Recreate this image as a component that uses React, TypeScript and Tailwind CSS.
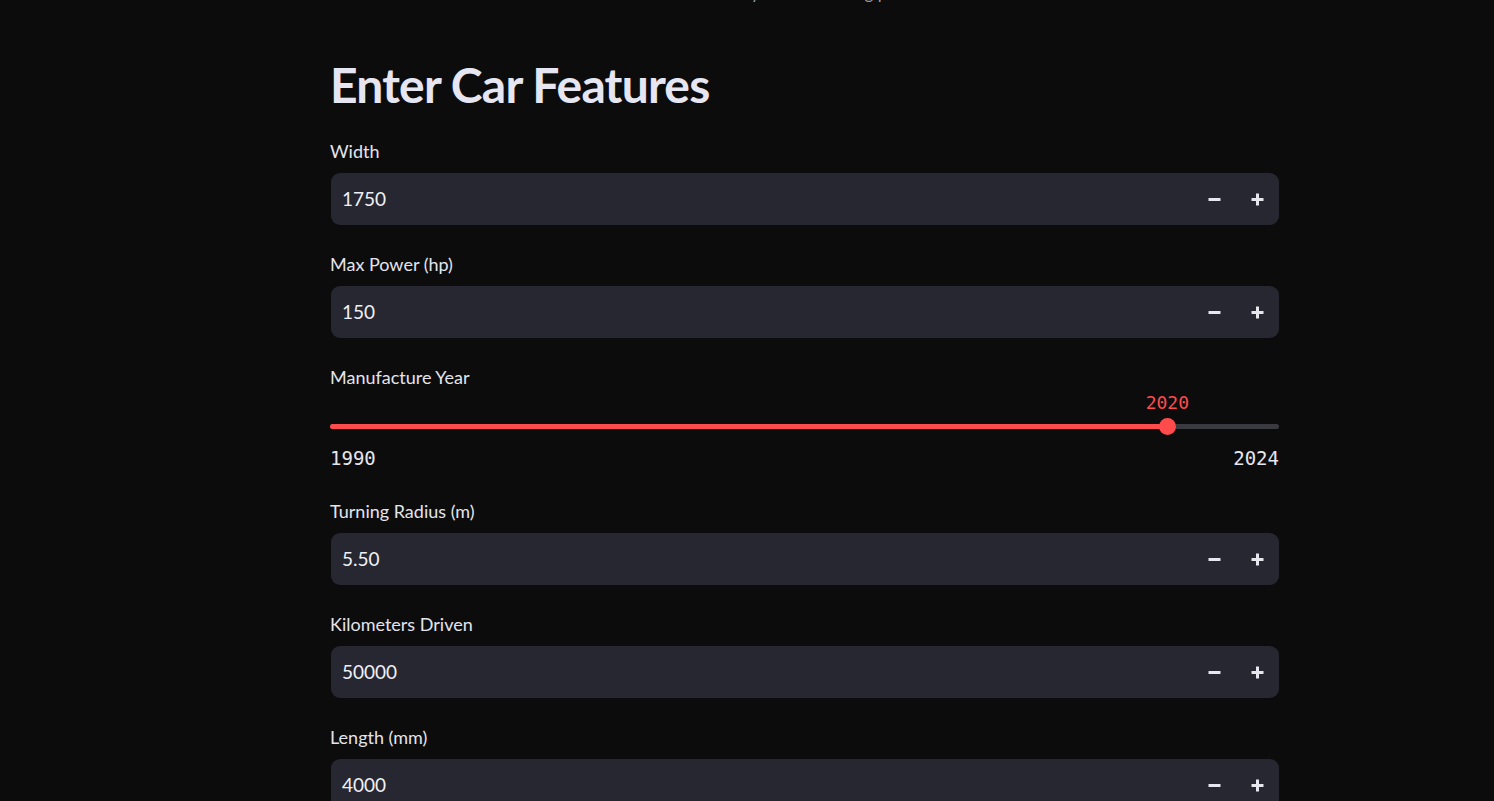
import React from "react";

const sans = { fontFamily: '"Lato", "Noto Sans", sans-serif' };
const mono = { fontFamily: '"DejaVu Sans Mono", "Liberation Mono", monospace' };

function Minus() {
  return (
    <svg width="13" height="13" viewBox="0 0 13 13">
      <rect x="0.5" y="5" width="12" height="3" fill="#e6e6ee" />
    </svg>
  );
}
function Plus() {
  return (
    <svg width="13" height="13" viewBox="0 0 13 13">
      <rect x="0.5" y="5" width="12" height="3" fill="#e6e6ee" />
      <rect x="5" y="0.5" width="3" height="12" fill="#e6e6ee" />
    </svg>
  );
}

function NumberField({ label, value }: { label: string; value: string }) {
  return (
    <div className="mb-[27px]">
      <div className="h-[24px] leading-[24px] text-[18px] text-[#e4e4ec] mb-[10px]" style={sans}>
        {label}
      </div>
      <div className="ml-[1px] h-[52px] rounded-[9px] bg-[#262730] flex items-center">
        <div className="flex-1 pl-[11px] text-[19px] text-[#f0f0f6]" style={sans}>
          {value}
        </div>
        <div className="w-[43px] h-full flex items-center justify-center">
          <Minus />
        </div>
        <div className="w-[43px] h-full flex items-center justify-center">
          <Plus />
        </div>
      </div>
    </div>
  );
}

function SliderField() {
  const pct = ((2020 - 1990) / (2024 - 1990)) * 100;
  return (
    <div className="mb-[31px]">
      <div className="h-[24px] leading-[24px] text-[18px] text-[#e4e4ec]" style={sans}>
        Manufacture Year
      </div>
      <div className="h-[25px]" />
      <div className="relative h-[24px] flex items-center">
        <div className="relative w-full h-[5px] rounded-full bg-[#3a3b41]">
          <div className="h-full rounded-full bg-[#ff4b4b]" style={{ width: `${pct}%` }} />
          <div
            className="absolute top-1/2 w-[17px] h-[17px] -mt-[8.5px] -ml-[8.5px] rounded-full bg-[#ff4b4b]"
            style={{ left: `${pct}%` }}
          />
          <div
            className="absolute -top-[31px] -translate-x-1/2 text-[18px] leading-[20px] text-[#ff4b4b]"
            style={{ left: `${pct}%`, ...mono }}
          >
            2020
          </div>
        </div>
      </div>
      <div className="mt-[10px] h-[20px] leading-[20px] flex justify-between text-[19px] text-[#e6e6ee]" style={mono}>
        <span>1990</span>
        <span>2024</span>
      </div>
    </div>
  );
}

export default function App() {
  return (
    <div className="min-h-screen w-full bg-[#0c0c0d] overflow-hidden">
      <div className="pl-[330px] w-[1279px]">
        <div className="h-[5px] overflow-hidden flex justify-center">
          <div className="-mt-[17px] text-[17px] leading-[20px] text-[#9a9aa4] whitespace-nowrap" style={sans}>
            Predict your car&apos;s selling price
          </div>
        </div>
        <div
          className="mt-[45px] h-[70px] leading-[70px] text-[48px] font-bold tracking-[-0.8px] text-[#e6e6f2]"
          style={sans}
        >
          Enter Car Features
        </div>
        <div className="mt-[19px]">
          <NumberField label="Width" value="1750" />
          <NumberField label="Max Power (hp)" value="150" />
          <SliderField />
          <NumberField label="Turning Radius (m)" value="5.50" />
          <NumberField label="Kilometers Driven" value="50000" />
          <NumberField label="Length (mm)" value="4000" />
        </div>
      </div>
    </div>
  );
}
